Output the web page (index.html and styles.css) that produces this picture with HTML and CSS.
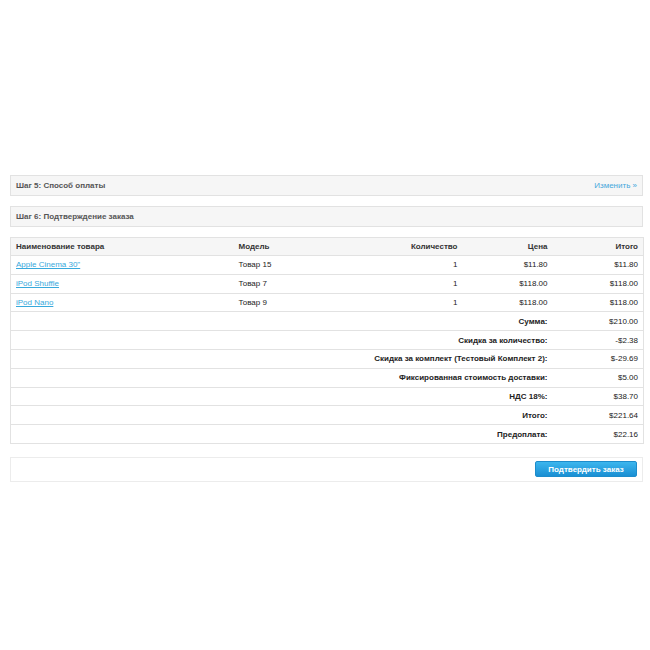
FILE: index.html
```html
<!DOCTYPE html>
<html lang="ru">
<head>
<meta charset="utf-8">
<link rel="stylesheet" href="styles.css">
</head>
<body>
<div class="page">
  <div class="panel">
    <span class="panel-title">Шаг 5: Способ оплаты</span>
    <a class="panel-link" href="#">Изменить »</a>
  </div>
  <div class="panel">
    <span class="panel-title">Шаг 6: Подтверждение заказа</span>
  </div>
  <table class="order">
    <colgroup>
      <col class="c1"><col class="c2"><col class="c3"><col class="c4"><col class="c5">
    </colgroup>
    <thead>
      <tr>
        <th class="left">Наименование товара</th>
        <th class="left">Модель</th>
        <th class="right">Количество</th>
        <th class="right">Цена</th>
        <th class="right">Итого</th>
      </tr>
    </thead>
    <tbody>
      <tr><td class="left"><a href="#">Apple Cinema 30"</a></td><td class="left">Товар 15</td><td class="right">1</td><td class="right">$11.80</td><td class="right">$11.80</td></tr>
      <tr><td class="left"><a href="#">iPod Shuffle</a></td><td class="left">Товар 7</td><td class="right">1</td><td class="right">$118.00</td><td class="right">$118.00</td></tr>
      <tr><td class="left"><a href="#">iPod Nano</a></td><td class="left">Товар 9</td><td class="right">1</td><td class="right">$118.00</td><td class="right">$118.00</td></tr>
    </tbody>
    <tfoot>
      <tr><td colspan="4" class="label">Сумма:</td><td class="right">$210.00</td></tr>
      <tr><td colspan="4" class="label">Скидка за количество:</td><td class="right">-$2.38</td></tr>
      <tr><td colspan="4" class="label">Скидка за комплект (Тестовый Комплект 2):</td><td class="right">$-29.69</td></tr>
      <tr><td colspan="4" class="label">Фиксированная стоимость доставки:</td><td class="right">$5.00</td></tr>
      <tr><td colspan="4" class="label">НДС 18%:</td><td class="right">$38.70</td></tr>
      <tr><td colspan="4" class="label">Итого:</td><td class="right">$221.64</td></tr>
      <tr><td colspan="4" class="label">Предоплата:</td><td class="right">$22.16</td></tr>
    </tfoot>
  </table>
  <div class="buttons">
    <button class="btn" type="button">Подтвердить заказ</button>
  </div>
</div>
</body>
</html>
```
FILE: styles.css
```css
html, body {
  margin: 0;
  padding: 0;
  background: #ffffff;
}
body {
  font-family: "Liberation Sans", Arial, sans-serif;
  font-size: 8px;
  color: #333;
  width: 650px;
  height: 650px;
}
.page {
  padding: 175px 7px 0 10px;
}
.panel {
  display: flex;
  align-items: center;
  justify-content: space-between;
  box-sizing: border-box;
  height: 21px;
  padding: 0 5px;
  border: 1px solid #e2e2e2;
  background: #f6f6f6;
  margin-bottom: 10px;
}
.panel-title {
  font-weight: bold;
  color: #555;
}
.panel-link {
  color: #46a8dc;
  text-decoration: none;
}
.order {
  width: 633px;
  border-collapse: collapse;
  border: 1px solid #e2e2e2;
  margin-bottom: 13px;
  table-layout: fixed;
}
.c1 { width: 223px; }
.c2 { width: 140px; }
.c3 { width: 89px; }
.c4 { width: 90px; }
.c5 { width: 91px; }
.order th, .order td {
  height: 17.8px;
  padding: 0 5px;
  border-top: 1px solid #e2e2e2;
  white-space: nowrap;
  color: #222;
}
.order th {
  background: #f6f6f6;
  font-weight: bold;
  color: #333;
}
.order thead th {
  height: 17px;
}
.left { text-align: left; }
.right { text-align: right; }
.label {
  text-align: right;
  font-weight: bold;
  color: #222;
}
.order a {
  color: #38a9dc;
  text-decoration: underline;
}
.buttons {
  display: flex;
  justify-content: flex-end;
  align-items: center;
  box-sizing: border-box;
  height: 25px;
  padding: 0 5px;
  border: 1px solid #ececec;
}
.btn {
  font-family: "Liberation Sans", Arial, sans-serif;
  font-size: 8px;
  font-weight: bold;
  color: #fff;
  width: 102px;
  height: 16px;
  padding: 0;
  border: 1px solid #1d8ccb;
  border-radius: 2px;
  background: linear-gradient(#3cb6ee, #1a8fd3);
}
```
